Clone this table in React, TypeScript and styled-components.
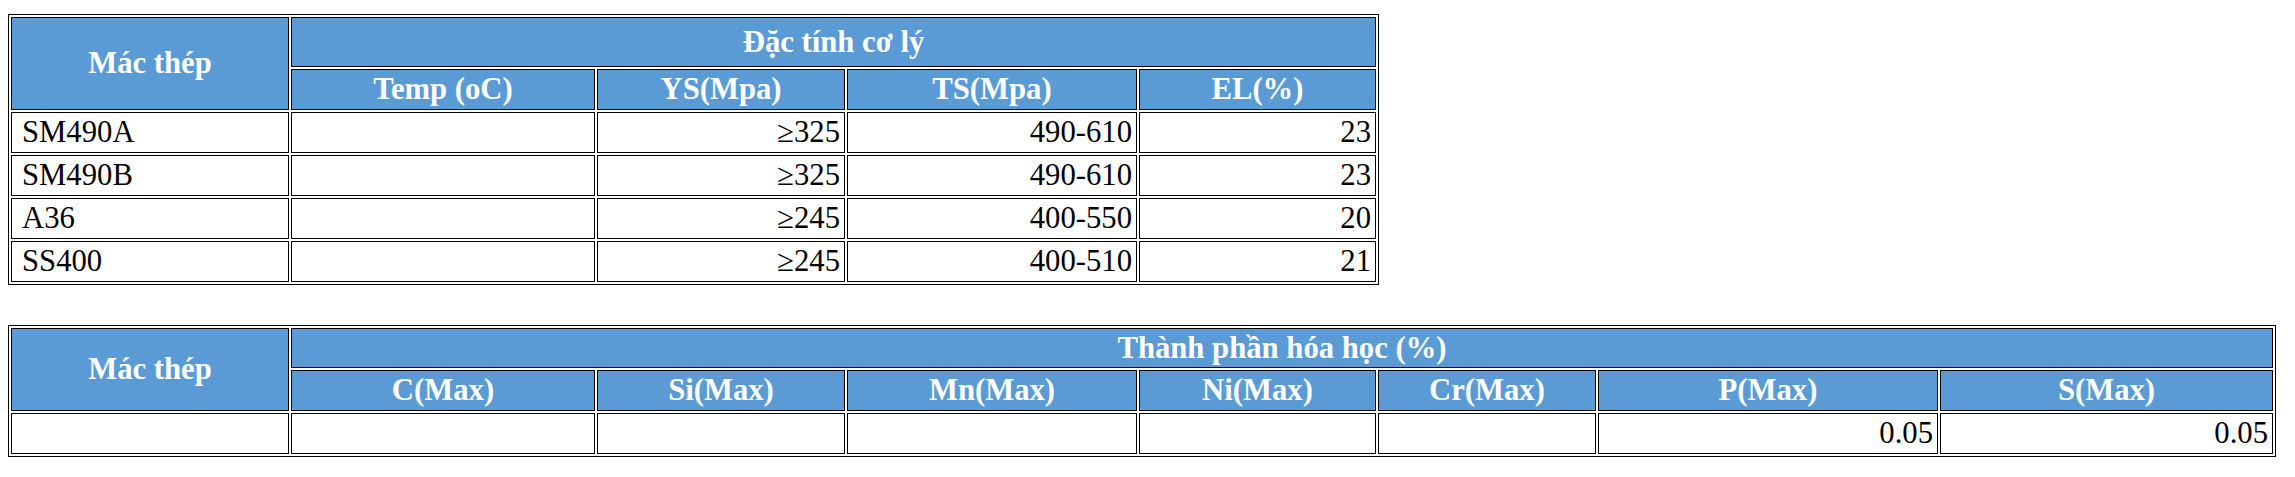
import React from "react";
import styled, { createGlobalStyle } from "styled-components";

const GlobalStyle = createGlobalStyle`
  body {
    margin: 8px;
    background: #ffffff;
    font-family: "Liberation Serif", "Times New Roman", serif;
  }
`;

interface MechRow {
  grade: string;
  temp: string;
  ys: string;
  ts: string;
  el: string;
}

const mechRows: MechRow[] = [
  { grade: "SM490A", temp: "", ys: "≥325", ts: "490-610", el: "23" },
  { grade: "SM490B", temp: "", ys: "≥325", ts: "490-610", el: "23" },
  { grade: "A36", temp: "", ys: "≥245", ts: "400-550", el: "20" },
  { grade: "SS400", temp: "", ys: "≥245", ts: "400-510", el: "21" },
];

const mechCols = [278, 304, 248, 290, 237];
const chemCols = [278, 304, 248, 290, 237, 218, 340, 333];

const chemHeads = ["C(Max)", "Si(Max)", "Mn(Max)", "Ni(Max)", "Cr(Max)", "P(Max)", "S(Max)"];
const chemValues = ["", "", "", "", "", "0.05", "0.05"];

const App: React.FC = () => {
  return (
    <Page>
      <GlobalStyle />
      <Table $width={1371}>
        <colgroup>
          {mechCols.map((w, i) => (
            <Col key={i} $w={w} />
          ))}
        </colgroup>
        <thead>
          <tr>
            <HeadCell rowSpan={2} $line={37}>
              Mác thép
            </HeadCell>
            <HeadCell colSpan={4} $line={46}>
              Đặc tính cơ lý
            </HeadCell>
          </tr>
          <tr>
            <HeadCell>Temp (oC)</HeadCell>
            <HeadCell>YS(Mpa)</HeadCell>
            <HeadCell>TS(Mpa)</HeadCell>
            <HeadCell>EL(%)</HeadCell>
          </tr>
        </thead>
        <tbody>
          {mechRows.map((row) => (
            <tr key={row.grade}>
              <Cell>{row.grade}</Cell>
              <Cell $right>{row.temp}</Cell>
              <Cell $right>{row.ys}</Cell>
              <Cell $right>{row.ts}</Cell>
              <Cell $right>{row.el}</Cell>
            </tr>
          ))}
        </tbody>
      </Table>

      <Table $width={2268}>
        <colgroup>
          {chemCols.map((w, i) => (
            <Col key={i} $w={w} />
          ))}
        </colgroup>
        <thead>
          <tr>
            <HeadCell rowSpan={2}>Mác thép</HeadCell>
            <HeadCell colSpan={7} $line={36}>
              Thành phần hóa học (%)
            </HeadCell>
          </tr>
          <tr>
            {chemHeads.map((h) => (
              <HeadCell key={h}>{h}</HeadCell>
            ))}
          </tr>
        </thead>
        <tbody>
          <tr>
            <Cell></Cell>
            {chemValues.map((v, i) => (
              <Cell key={i} $right>
                {v}
              </Cell>
            ))}
          </tr>
        </tbody>
      </Table>
    </Page>
  );
};

const Page = styled.div`
  display: flex;
  flex-direction: column;
  align-items: flex-start;
  gap: 40px;
  padding-top: 6px;
`;

const Table = styled.table<{ $width: number }>`
  width: ${(p) => p.$width}px;
  table-layout: fixed;
  border-collapse: separate;
  border-spacing: 2px;
  border: 1px solid #000;
  font-family: "Liberation Serif", "Times New Roman", serif;
  font-size: 30.7px;
  color: #000;
`;

const Col = styled.col<{ $w: number }>`
  width: ${(p) => p.$w}px;
`;

const HeadCell = styled.th<{ $line?: number }>`
  background-color: #5b9bd5;
  color: #ffffff;
  font-weight: bold;
  text-align: center;
  vertical-align: middle;
  border: 1px solid #000;
  padding: 1px 4px;
  line-height: ${(p) => p.$line ?? 37}px;
  white-space: nowrap;
`;

const Cell = styled.td<{ $right?: boolean }>`
  border: 1px solid #000;
  padding: 1px 4px 1px 10px;
  line-height: 37px;
  text-align: ${(p) => (p.$right ? "right" : "left")};
  vertical-align: middle;
  white-space: nowrap;
  height: 37px;
`;

export default App;
